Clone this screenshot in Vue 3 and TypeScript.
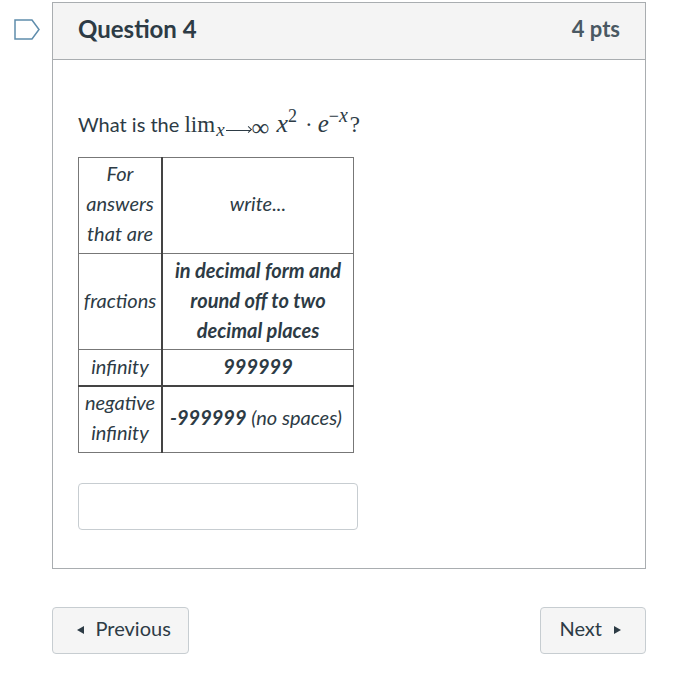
<script setup lang="ts">
const rows = [
  { a: ['For', 'answers', 'that are'], b: ['write...'], strong: false },
  { a: ['fractions'], b: ['in decimal form and', 'round off to two', 'decimal places'], strong: true },
  { a: ['infinity'], b: ['999999'], strong: true },
]
</script>

<template>
  <div class="page">
    <div class="flag-col">
      <svg class="flag" width="26" height="21" viewBox="0 0 26 21">
        <path d="M1 1 H18 L25 10.5 L18 20 H1 Z" fill="#fff" stroke="#5f8dac" stroke-width="1.5" />
      </svg>
    </div>
    <div class="main">
      <section class="question">
        <header class="q-head">
          <h2>Question 4</h2>
          <span class="pts">4 pts</span>
        </header>
        <div class="q-body">
          <p class="prompt">
            What is the
            <span class="math"><span class="lim">lim</span><span class="sub"><i>x</i><span class="arrow"></span><span class="inf">∞</span></span><i class="x">x</i><sup class="two">2</sup><span class="dot">·</span><i class="e">e</i><sup class="minus">−<i>x</i></sup><span class="q">?</span></span>
          </p>
          <table class="info">
            <tbody>
              <tr v-for="(r, i) in rows" :key="i" :class="'r' + i">
                <td class="c1"><em><template v-for="l in r.a" :key="l">{{ l }}<br></template></em></td>
                <td class="c2">
                  <em :class="{ bold: r.strong }"><template v-for="l in r.b" :key="l">{{ l }}<br></template></em>
                </td>
              </tr>
              <tr class="r3">
                <td class="c1"><em>negative<br>infinity</em></td>
                <td class="c2 neg"><em><b>-999999</b> (no spaces)</em></td>
              </tr>
            </tbody>
          </table>
          <input class="answer" type="text">
        </div>
      </section>
      <nav class="nav">
        <button class="btn prev"><span class="tri left"></span>Previous</button>
        <button class="btn next">Next<span class="tri right"></span></button>
      </nav>
    </div>
  </div>
</template>

<style>
html, body { background: #fff; }
</style>

<style scoped>
.page {
  display: flex;
  height: 691px;
  box-sizing: border-box;
  padding-top: 2px;
  font-family: Lato, "Liberation Sans", sans-serif;
  color: #2d3b45;
}
.flag-col { width: 52px; padding: 17px 0 0 14px; box-sizing: border-box; }
.flag { display: block; }
.main { width: 594px; }
.question { border: 1px solid #a9adb0; height: 567px; box-sizing: border-box; }
.q-head {
  display: flex;
  justify-content: space-between;
  align-items: center;
  height: 57px;
  padding: 0 25px 6px;
  box-sizing: border-box;
  background: #f4f4f4;
  border-bottom: 1px solid #a9adb0;
}
h2 { margin: 0; font-size: 24px; font-weight: 700; }
.pts { font-size: 22px; font-weight: 700; color: #4a5963; }
.q-body { padding: 49px 25px 0; }
.prompt { margin: 0 0 18px; height: 30px; font-size: 20px; line-height: 30px; white-space: nowrap; }
.math { font-family: "Liberation Serif", serif; font-size: 23px; }
.x { font-size: 26px; }
.e { font-size: 25px; }
.sub { font-size: 19px; position: relative; top: 4px; margin-right: 7px; margin-left: 1px; }
.inf { font-size: 25px; line-height: 0; margin-left: 1px; }
.arrow {
  display: inline-block;
  width: 25px;
  height: 1px;
  background: #2d3b45;
  vertical-align: 5px;
  position: relative;
  margin-left: 1px;
}
.arrow::after {
  content: "";
  position: absolute;
  right: 0;
  top: -3px;
  width: 5px;
  height: 5px;
  border-top: 1px solid #2d3b45;
  border-right: 1px solid #2d3b45;
  transform: rotate(45deg);
  box-sizing: border-box;
}
.math sup { font-size: 18px; line-height: 0; vertical-align: 10px; }
.math sup i { font-size: 20px; }
.dot { margin: 0 5px 0 8px; }
.q { margin-left: 2px; }
.info { border-collapse: collapse; font-size: 20px; line-height: 30px; border: 1px solid #777; }
.info td { border: 1px solid #777; padding: 2.5px 0; text-align: center; }
.info td.c1 { width: 82px; border-right: 2px solid #444; }
.info td.c2 { width: 190px; }
.info .neg em { margin-right: 4px; }
.info em { display: block; }
.info .r0 em { transform: translateY(-3px); }
.info .r1 em { transform: translateY(-2px); }
.info .r2 td { height: 30px; }
.info .r2 em { transform: translateY(-2px); }
.info .r3 td { border-top: 2px solid #444; padding-top: 2.5px; padding-bottom: 2.5px; }
.info .r3 em { transform: translateY(-3px); }
.bold { font-weight: 700; }
.answer {
  display: block;
  margin-top: 30px;
  width: 280px;
  height: 47px;
  box-sizing: border-box;
  border: 1px solid #c7cdd1;
  border-radius: 4px;
}
.nav { display: flex; justify-content: space-between; margin-top: 38px; }
.btn {
  display: flex;
  align-items: center;
  height: 47px;
  padding: 0 18px 5px;
  background: #f5f5f5;
  border: 1px solid #c7cdd1;
  border-radius: 4px;
  font: 20px Lato, "Liberation Sans", sans-serif;
  color: #2d3b45;
}
.prev { width: 137px; }
.tri { width: 0; height: 0; border-top: 4px solid transparent; border-bottom: 4px solid transparent; position: relative; top: 2px; }
.tri.left { border-right: 7px solid #2d3b45; margin: 0 11.5px 0 6px; }
.tri.right { border-left: 7px solid #2d3b45; margin: 0 6px 0 12px; }
</style>
